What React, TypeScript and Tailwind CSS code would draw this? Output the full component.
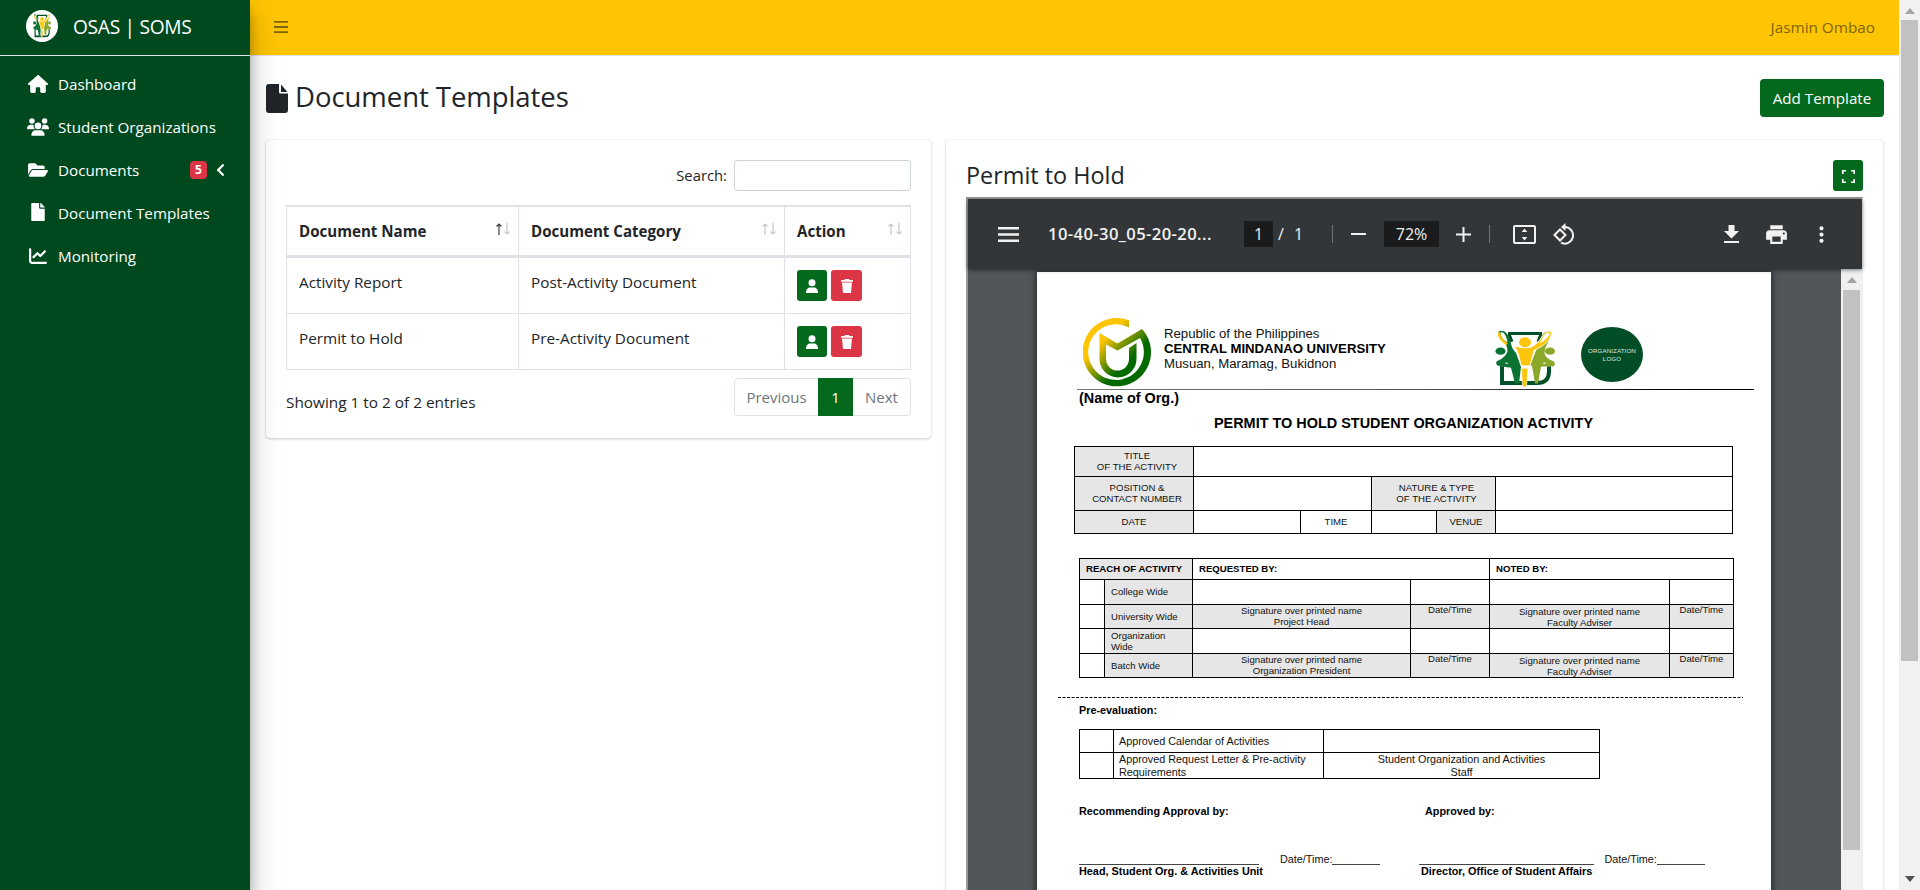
import React, { ReactNode } from "react";
import { FaFolderOpen, FaFile, FaChevronLeft } from "react-icons/fa";
import { FaHouse, FaChartLine, FaUsers } from "react-icons/fa6";
import { MdPrint, MdMoreVert } from "react-icons/md";

function SchoolLogo({ className }: { className: string }) {
  return (
    <svg viewBox="0 0 60 58" preserveAspectRatio="none" className={className}>
      <path d="M13 3.500h34M14 4l3 8M46 4l-3 8" fill="none" stroke="#00512a" strokeWidth="3" />
      <path d="M7 37v17h35q12 0 12-12v-5" fill="none" stroke="#00512a" strokeWidth="4" />
      <path d="M3.500 1.500c7-3 11 5 12.500 12 1 6 3 7 5 10l5 14-2 17h-4l-4-16C12 37 4 38 1.500 35c-1-3 1-4 3-4.500C8 29 11 26 12.500 22 13 13 5 9 3.500 1.500z" fill="#0a7233" />
      <path d="M4 2.500c-.5 6 4.500 9.500 8 12" fill="none" stroke="#fdc60a" strokeWidth="2.600" />
      <path d="M5.500 2.500c4-1.500 6 5 7 10-4-2-7-6-7-10z" fill="#fff" />
      <ellipse cx="5.500" cy="21.500" rx="5" ry="3.800" fill="#0a7233" />
      <path d="M56.500 1.500c-8-2-11 5-12.500 12l-9 23h2l3 18h3l3-17c5-1 12 1 13.500-2 1-3-1-4-3-4.500-4-1.500-6-4-7-7 0-9 7-14 7-22.500z" fill="#8aa82a" />
      <ellipse cx="55" cy="21.500" rx="5" ry="3.800" fill="#8aa82a" />
      <path d="M56.500 1.500C48-.5 46 13 37 17c-5 2-10 1-17-.5 3 6 5 13 6 20h9l4-16C49 17 57 9 56.500 1.500z" fill="#fdc60a" stroke="#fff" strokeWidth=".8" />
      <path d="M26.500 39h6.500l-1.500 19h-4z" fill="#fdc60a" stroke="#fff" strokeWidth=".6" />
      <path d="M54.500 2.800c-5-.5-7 6-10 11 5-3 10-6.500 10-11z" fill="#fff" />
      <path d="M10 33l4 .5-3 1.200zM51 33l-4 .5 3 1.200z" fill="#fff" />
      <ellipse cx="30" cy="12.500" rx="6" ry="5" fill="#fdc60a" />
    </svg>
  );
}

function UniversityLogo() {
  return (
    <svg viewBox="0 0 69 69" className="h-[69px] w-[69px]">
      <defs>
        <linearGradient id="cmu" x1="0.1" y1="0.2" x2="0.65" y2="0.75">
          <stop offset="0.3" stopColor="#ffc400" />
          <stop offset="0.9" stopColor="#046a00" />
        </linearGradient>
      </defs>
      <path d="M46 2.200A34.200 34.200 0 1 0 59 11L34.500 25.500 16.500 15V41a18.500 18.500 0 0 0 37 0V25l-7.500 5v11a11.500 11.500 0 0 1-23 0V26.500l11.500 6L57 20A27.800 27.800 0 1 1 46 9.500z" fill="url(#cmu)" fillRule="evenodd" />
    </svg>
  );
}

function NavItem({ icon, label, children }: { icon: ReactNode; label: string; children?: ReactNode }) {
  return (
    <a className="mb-[3.2px] flex h-10 items-center pl-[26px] text-white">
      <span className="flex w-6 justify-center">{icon}</span>
      <span className="ml-2 text-[15.2px]">{label}</span>
      {children}
    </a>
  );
}

function SortArrows({ active }: { active?: boolean }) {
  return (
    <svg viewBox="0 0 14 12" className="mb-1 h-3 w-[14px]" fill="none" strokeWidth="1.200">
      <path d="M3 12V1M.5 3.500 3 1l2.500 2.500" stroke={active ? "#39424b" : "#c8c9ca"} />
      <path d="M11 0v11M8.500 8.500 11 11l2.500-2.500" stroke="#c8c9ca" />
    </svg>
  );
}

function HeadCell({ children, active }: { children: ReactNode; active?: boolean }) {
  return (
    <div className="flex items-center justify-between border-r border-[#dee2e6] pr-[8px] pl-3 text-[15.1px] font-bold">
      {children}
      <SortArrows active={active} />
    </div>
  );
}

function TableRow({ name, category }: { name: string; category: string }) {
  return (
    <div className="grid h-14 grid-cols-[232px_266px_126px] border-b border-l border-[#dee2e6] text-[15.3px]">
      <div className="border-r border-[#dee2e6] pt-[13px] pl-3">{name}</div>
      <div className="border-r border-[#dee2e6] pt-[13px] pl-3">{category}</div>
      <div className="flex gap-1 border-r border-[#dee2e6] pt-3 pl-3">
        <button className="flex h-[31px] w-[30px] items-center justify-center rounded-[3px] bg-[#04691d]">
          <svg viewBox="0 0 12 14" className="h-[14px] w-3" fill="#fff">
            <circle cx="6" cy="3.700" r="3.500" />
            <path d="M0 14c0-4 2-5.500 4-5.500h4c2 0 4 1.500 4 5.500z" />
          </svg>
        </button>
        <button className="flex h-[31px] w-[31px] items-center justify-center rounded-[3px] bg-[#dc3545]">
          <svg viewBox="0 0 12 14" className="h-[14px] w-3" fill="#fff">
            <path d="M0 1h3.500L4 0h4l.5 1H12v1.700H0zM1 3.400h10L10 14H2z" />
          </svg>
        </button>
      </div>
    </div>
  );
}

function Cell({ children, className = "" }: { children?: ReactNode; className?: string }) {
  return <div className={"border-r border-b border-black " + className}>{children}</div>;
}

const label = "flex items-center justify-center text-center bg-[#e6e6e6] pb-[2px]";

function SignRow({ reach, left, right, gray }: { reach: ReactNode; left?: string; right?: string; gray?: boolean }) {
  return (
    <>
      <Cell />
      <Cell className="flex items-center bg-[#e6e6e6] pb-px pl-1.5">
        <span>{reach}</span>
      </Cell>
      <Cell className={gray ? "flex items-center justify-center bg-[#e6e6e6] pb-[2px] text-center" : ""}>
        {left && <span>Signature over printed name<br />{left}</span>}
      </Cell>
      <Cell className={gray ? "bg-[#e6e6e6] text-center leading-[9px]" : ""}>{gray && "Date/Time"}</Cell>
      <Cell className={gray ? "flex items-center justify-center bg-[#e6e6e6] text-center" : ""}>
        {right && <span>Signature over printed name<br />{right}</span>}
      </Cell>
      <Cell className={gray ? "bg-[#e6e6e6] text-center leading-[9px]" : ""}>{gray && "Date/Time"}</Cell>
    </>
  );
}

function PermitPage() {
  return (
    <div className="ml-[69px] h-[621px] w-[734px] overflow-hidden bg-white font-['Liberation_Sans',Arial,sans-serif] text-[#111] shadow-[0_0_6px_1px_rgba(0,0,0,0.55)]">
      <div className="flex h-[117px] pl-[46px]">
        <div className="pt-[46px]">
          <UniversityLogo />
        </div>
        <div className="w-[331px] pt-[54px] pl-3 text-[13.2px] leading-[15px] whitespace-nowrap">
          <div>Republic of the Philippines</div>
          <div className="font-bold text-black">CENTRAL MINDANAO UNIVERSITY</div>
          <div>Musuan, Maramag, Bukidnon</div>
        </div>
        <SchoolLogo className="mt-[58px] ml-[12px] h-[57px] w-[60px]" />
        <div className="mt-[55px] ml-[26px] flex h-[55px] w-[62px] items-center justify-center rounded-[50%] bg-[#004d26] text-center text-[6.2px] leading-2 tracking-[0.1px] text-[#dfe8e2]">
          <span>ORGANIZATION<br />LOGO</span>
        </div>
      </div>
      <div className="ml-10 h-px w-[677px] bg-gradient-to-r from-[#777] via-[#555] to-black" />
      <div className="ml-[42px] text-[14.4px] leading-[17px] font-bold text-black">(Name of Org.)</div>
      <div className="mt-[7px] -ml-px text-center text-[14.45px] leading-[18px] font-bold text-black">PERMIT TO HOLD STUDENT ORGANIZATION ACTIVITY</div>

      <div className="mt-[14px] ml-[37px] w-[659px] border-t border-l border-black text-[9.6px] leading-[11px]">
        <div className="grid h-[30px] grid-cols-[119px_539px]">
          <Cell className={label}><span className="pl-1.5">TITLE<br />OF THE ACTIVITY</span></Cell>
          <Cell />
        </div>
        <div className="grid h-[34px] grid-cols-[119px_178px_124px_237px]">
          <Cell className={label}><span className="pl-1.5">POSITION &amp;<br />CONTACT NUMBER</span></Cell>
          <Cell />
          <Cell className={label}><span className="pl-1.5">NATURE &amp; TYPE<br />OF THE ACTIVITY</span></Cell>
          <Cell />
        </div>
        <div className="grid h-[23px] grid-cols-[119px_107px_71px_65px_59px_237px]">
          <Cell className={label}>DATE</Cell>
          <Cell />
          <Cell className="flex items-center justify-center pb-[2px]">TIME</Cell>
          <Cell />
          <Cell className={label}>VENUE</Cell>
          <Cell />
        </div>
      </div>

      <div className="mt-[24px] ml-[42px] w-[655px] border-t border-l border-black text-[9.6px] leading-[11px]">
        <div className="grid h-[21px] grid-cols-[113px_297px_244px] font-bold text-black">
          <Cell className="flex items-center bg-[#e6e6e6] pb-[2px] pl-1.5">REACH OF ACTIVITY</Cell>
          <Cell className="flex items-center pb-[2px] pl-1.5">REQUESTED BY:</Cell>
          <Cell className="flex items-center pb-[2px] pl-1.5">NOTED BY:</Cell>
        </div>
        <div className="grid grid-cols-[25px_88px_218px_79px_180px_64px] grid-rows-[25px_24px_25px_24px]">
          <SignRow reach="College Wide" />
          <SignRow reach="University Wide" left="Project Head" right="Faculty Adviser" gray />
          <SignRow reach={<>Organization<br />Wide</>} />
          <SignRow reach="Batch Wide" left="Organization President" right="Faculty Adviser" gray />
        </div>
      </div>

      <svg className="mt-[19px] ml-[21px] block h-px w-[685px]">
        <path d="M0 .5h685" stroke="#000" strokeDasharray="3 1.500" />
      </svg>
      <div className="mt-[6px] ml-[42px] text-[10.8px] leading-[13px] font-bold text-black">Pre-evaluation:</div>

      <div className="mt-[12px] ml-[42px] grid w-[521px] grid-cols-[34px_210px_276px] grid-rows-[23px_26px] border-t border-l border-black text-[10.8px] leading-[13px]">
        <Cell />
        <Cell className="flex items-center pl-[5px]">Approved Calendar of Activities</Cell>
        <Cell />
        <Cell />
        <Cell className="pl-[5px] whitespace-nowrap">Approved Request Letter &amp; Pre-activity<br />Requirements</Cell>
        <Cell className="text-center">Student Organization and Activities<br />Staff</Cell>
      </div>

      <div className="mt-[26px] ml-[42px] grid grid-cols-[346px_1fr] text-[10.8px] leading-[13px] font-bold text-black">
        <span>Recommending Approval by:</span>
        <span>Approved by:</span>
      </div>
      <div className="mt-[35px] ml-[42px] flex h-[12px] items-end text-[10.8px] leading-[12px]">
        <div className="h-px w-[180px] bg-[#444]" />
        <div className="ml-[21px]">Date/Time:</div>
        <div className="h-px w-[48px] bg-[#444]" />
        <div className="ml-[39px] h-px w-[175px] bg-[#444]" />
        <div className="ml-[10px]">Date/Time:</div>
        <div className="h-px w-[48px] bg-[#444]" />
      </div>
      <div className="ml-[42px] grid grid-cols-[342px_1fr] text-[10.85px] leading-[13px] font-bold text-black">
        <span>Head, Student Org. &amp; Activities Unit</span>
        <span>Director, Office of Student Affairs</span>
      </div>
    </div>
  );
}

function PdfToolbar() {
  return (
    <div className="relative z-10 flex h-[70px] items-center bg-[#323639] text-[16px] text-[#f1f1f1] shadow-[0_1px_4px_rgba(0,0,0,0.5)]">
      <svg viewBox="0 0 21 15" className="ml-[30px] h-[15px] w-[21px]" stroke="#f1f1f1" strokeWidth="2.400">
        <path d="M0 1.200h21M0 7.500h21M0 13.800h21" />
      </svg>
      <span className="ml-[29px] w-[196px] text-[16.6px] font-semibold tracking-[0.4px] whitespace-nowrap">10-40-30_05-20-20...</span>
      <span className="flex h-[26px] w-[29px] items-center justify-center bg-[#191b1c]">1</span>
      <span className="ml-[5px] flex w-[54px] gap-[10px]"><span>/</span><span>1</span></span>
      <span className="h-[18px] w-px bg-[#707375]" />
      <svg viewBox="0 0 15 2" className="ml-[18px] h-[2px] w-[15px]"><path d="M0 1h15" stroke="#f1f1f1" strokeWidth="2" /></svg>
      <span className="ml-[18px] flex h-[26px] w-[55px] items-center justify-center bg-[#191b1c]">72%</span>
      <svg viewBox="0 0 15 15" className="ml-[17px] h-[15px] w-[15px]"><path d="M0 7.500h15M7.500 0v15" stroke="#f1f1f1" strokeWidth="2" /></svg>
      <span className="ml-[18px] h-[18px] w-px bg-[#707375]" />
      <svg viewBox="0 0 23 19" className="ml-[23px] h-[19px] w-[23px]">
        <rect x="1" y="1" width="21" height="17" rx="1" fill="none" stroke="#f1f1f1" strokeWidth="2" />
        <path d="M11.500 3.500 14.300 7H8.700zM11.500 15.500 14.300 12H8.700z" fill="#f1f1f1" />
      </svg>
      <svg viewBox="0 0 22 22" className="ml-[17px] h-[22px] w-[22px]" fill="none" stroke="#f1f1f1" strokeWidth="2">
        <path d="M1.500 12 7 6.500l5.500 5.500L7 17.500zM10.500 4H12a8.300 8.300 0 1 1-4 15.700" />
        <path d="M8 4l4.500-4v8z" fill="#f1f1f1" stroke="none" />
      </svg>
      <svg viewBox="0 0 15 18" className="ml-[149px] h-[18px] w-[15px]" fill="#f1f1f1">
        <path d="M4.500 0h6v6H15l-7.500 7.500L0 6h4.500zM0 16h15v2H0z" />
      </svg>
      <MdPrint className="ml-[25px] h-[25px] w-[25px]" />
      <MdMoreVert className="ml-[20px] h-[25px] w-[25px]" />
    </div>
  );
}

export default function App() {
  return (
    <div className="flex h-[890px] w-full overflow-hidden bg-white font-['Open_Sans','Noto_Sans',sans-serif] text-[#212529]">
      <aside className="relative z-20 w-[250px] shrink-0 bg-[#00491e] shadow-[0_14px_28px_rgba(0,0,0,0.25),0_10px_10px_rgba(0,0,0,0.22)]">
        <div className="flex h-14 items-center border-b border-[#dee2e6] pl-[26px] text-white">
          <span className="mb-1 flex h-8 w-8 items-center justify-center rounded-full bg-white">
            <SchoolLogo className="h-[24px] w-[18px]" />
          </span>
          <span className="ml-[15px] text-[19.2px] tracking-[-0.3px]">OSAS | SOMS</span>
        </div>
        <nav className="pt-2">
          <NavItem icon={<FaHouse className="h-[18px] w-[20px]" />} label="Dashboard" />
          <NavItem icon={<FaUsers className="h-[22px] w-[22px]" />} label="Student Organizations" />
          <NavItem icon={<FaFolderOpen className="h-5 w-5" />} label="Documents">
            <span className="ml-auto flex h-[18px] w-[17px] items-center justify-center rounded bg-[#dc3545] text-[12px] font-bold">5</span>
            <FaChevronLeft className="mr-[25px] ml-[9px] h-[14px] w-[9px]" />
          </NavItem>
          <NavItem icon={<FaFile className="mb-[3px] h-[18px] w-[14px]" />} label="Document Templates" />
          <NavItem icon={<FaChartLine className="mb-[2px] h-[18px] w-[18px]" />} label="Monitoring" />
        </nav>
      </aside>

      <div className="flex w-[1649px] flex-col">
        <header className="flex h-14 shrink-0 items-center justify-between border-b border-[#dee2e6] bg-[#ffc503] pr-6 pl-[24px]">
          <svg viewBox="0 0 14 12" className="mb-[2px] h-3 w-[14px]" stroke="#80640a" strokeWidth="1.800">
            <path d="M0 .9h14M0 6h14M0 11.100h14" />
          </svg>
          <span className="text-[15.3px] text-[#80640a]">Jasmin Ombao</span>
        </header>

        <main className="flex flex-1 flex-col px-4">
          <div className="mt-[23px] flex h-[38px] items-center">
            <svg viewBox="0 0 22 29" className="h-[29px] w-[22px]" fill="#212529">
              <path d="M3 0h10v8a1.500 1.500 0 0 0 1.500 1.500H22V26a3 3 0 0 1-3 3H3a3 3 0 0 1-3-3V3a3 3 0 0 1 3-3zM15 .5 21.500 8H15z" />
            </svg>
            <h1 className="mb-[3px] ml-[7px] text-[27.5px] font-medium tracking-[-0.05px]">Document Templates</h1>
            <button className="ml-auto mr-[-1px] h-[38px] w-[124px] rounded bg-[#04691d] text-[15.2px] text-white">Add Template</button>
          </div>

          <div className="mt-[23px] flex flex-1 items-start gap-[15px]">
            <section className="h-[298px] w-[665px] rounded bg-white px-5 pt-5 shadow-[0_0_1px_rgba(0,0,0,0.125),0_1px_3px_rgba(0,0,0,0.2)]">
              <div className="flex h-[31px] items-center justify-end">
                <label className="mr-[7px] text-[14.8px]">Search:</label>
                <input className="h-[31px] w-[177px] rounded-[3px] border border-[#ced4da]" />
              </div>
              <div className="mt-[14px] w-[625px]">
                <div className="grid h-[53px] grid-cols-[232px_266px_126px] border-t-2 border-b-[3px] border-l border-[#dee2e6]">
                  <HeadCell active>Document Name</HeadCell>
                  <HeadCell>Document Category</HeadCell>
                  <HeadCell>Action</HeadCell>
                </div>
                <TableRow name="Activity Report" category="Post-Activity Document" />
                <TableRow name="Permit to Hold" category="Pre-Activity Document" />
              </div>
              <div className="mt-2 flex justify-between text-[15px]">
                <span className="pt-[13px] text-[15.35px]">Showing 1 to 2 of 2 entries</span>
                <div className="flex h-[38px] items-stretch rounded border border-[#dee2e6] text-[#6c757d]">
                  <span className="flex w-[83px] items-center justify-center">Previous</span>
                  <span className="-my-px flex w-[35px] items-center justify-center bg-[#04691d] text-white">1</span>
                  <span className="flex w-[57px] items-center justify-center">Next</span>
                </div>
              </div>
            </section>

            <section className="h-[760px] w-[937px] rounded bg-white pt-5 pl-5 shadow-[0_0_1px_rgba(0,0,0,0.125),0_1px_3px_rgba(0,0,0,0.2)]">
              <div className="flex h-[31px] w-[897px] items-center justify-between">
                <h2 className="text-[23.4px] font-medium">Permit to Hold</h2>
                <button className="flex h-[31px] w-[30px] items-center justify-center rounded-[3px] bg-[#04691d]">
                  <svg viewBox="0 0 13 13" className="mt-px h-[13px] w-[13px]" fill="none" stroke="#fff" strokeWidth="1.600">
                    <path d="M.8 4V.8H4M9 .8h3.200V4M12.200 9v3.200H9M4 12.200H.8V9" />
                  </svg>
                </button>
              </div>
              <div className="mt-[6px] h-[700px] w-[897px] border-t-2 border-r border-l-2 border-t-[#999] border-r-[#eee] border-l-[#999]">
                <PdfToolbar />
                <div className="flex bg-[#525659]">
                  <div className="h-[625px] w-[873px] overflow-hidden pt-[3px]">
                    <PermitPage />
                  </div>
                  <div className="flex w-[21px] flex-col items-center bg-[#f1f1f1]">
                    <svg viewBox="0 0 10 6" className="mt-[8px] h-[6px] w-[10px]"><path d="M0 6 5 0l5 6z" fill="#a3a3a3" /></svg>
                    <div className="mt-[7px] h-[560px] w-[17px] bg-[#c1c1c1]" />
                  </div>
                </div>
              </div>
            </section>
          </div>
        </main>
      </div>

      <div className="flex w-[21px] flex-col items-center bg-[#f1f1f1]">
        <svg viewBox="0 0 10 6" className="mt-[8px] h-[6px] w-[10px]"><path d="M0 6 5 0l5 6z" fill="#a3a3a3" /></svg>
        <div className="mt-[6px] h-[641px] w-[17px] bg-[#c1c1c1]" />
        <svg viewBox="0 0 10 6" className="mt-auto mb-[8px] h-[6px] w-[10px]"><path d="M0 0h10L5 6z" fill="#505050" /></svg>
      </div>
    </div>
  );
}
